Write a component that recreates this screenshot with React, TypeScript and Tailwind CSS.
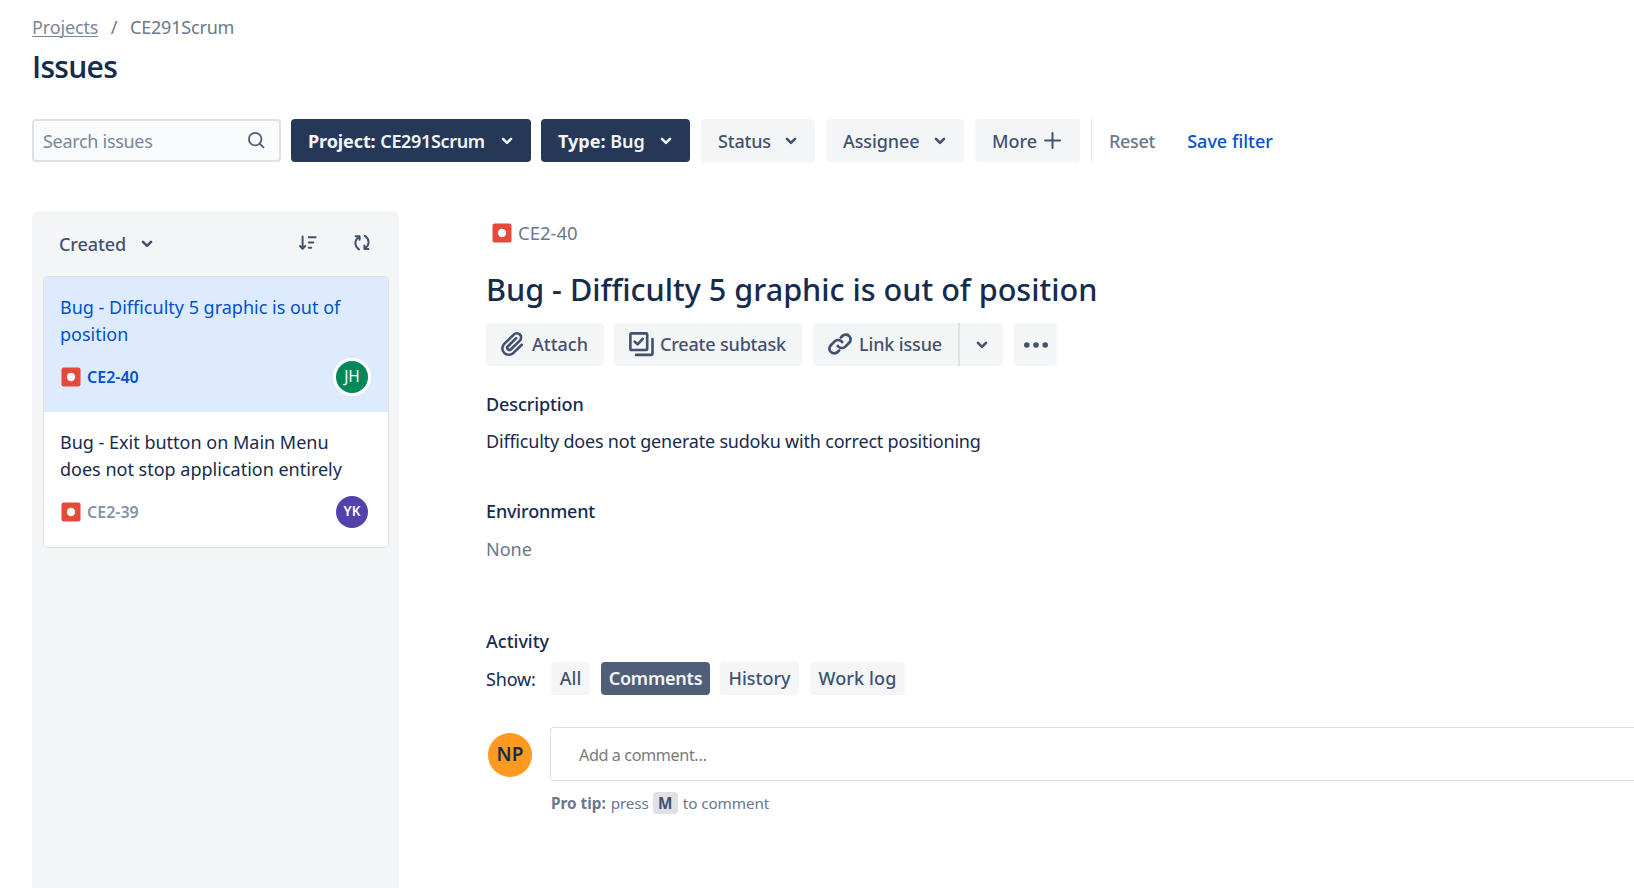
import type { ReactNode } from "react";

function Chevron({ className = "" }: { className?: string }) {
  return (
    <svg width="12" height="8" viewBox="0 0 12 8" fill="none" stroke="currentColor" strokeWidth="2.6" strokeLinecap="round" strokeLinejoin="round" className={`shrink-0 ${className}`}>
      <path d="M2 1.8 L6 5.8 L10 1.8" />
    </svg>
  );
}

function BugIcon({ className = "" }: { className?: string }) {
  return (
    <svg width="20" height="20" viewBox="0 0 20 20" className={`shrink-0 ${className}`}>
      <rect x="0.5" y="0.5" width="19" height="19" rx="2" fill="#e5493a" />
      <circle cx="10" cy="10" r="4.2" fill="#fff" />
    </svg>
  );
}

function AttachIcon() {
  return (
    <svg width="32" height="32" viewBox="0 0 24 24" fill="currentColor" className="mb-px shrink-0">
      <path d="M11.643 17.965c-1.53 1.495-4.016 1.496-5.542.004a3.773 3.773 0 01.002-5.412l7.147-6.985a2.316 2.316 0 013.22-.004c.893.873.895 2.282.004 3.153l-6.703 6.55a.653.653 0 01-.914-.008.62.62 0 010-.902l6.229-6.087a.941.941 0 000-1.353.995.995 0 00-1.384 0l-6.23 6.087a2.502 2.502 0 000 3.607 2.643 2.643 0 003.683.009l6.703-6.55a4.074 4.074 0 00-.003-5.859 4.306 4.306 0 00-5.986.005l-7.148 6.985a5.655 5.655 0 00-.001 8.118c2.29 2.237 6.015 2.238 8.308-.003l6.225-6.084a.94.94 0 000-1.353.995.995 0 00-1.384 0l-6.227 6.085z" />
    </svg>
  );
}

function LinkIcon() {
  return (
    <svg width="32" height="32" viewBox="0 0 24 24" fill="currentColor" className="mb-px shrink-0">
      <path d="M12.856 5.457l-.937.92a1.002 1.002 0 000 1.437 1.047 1.047 0 001.463 0l.984-.966c.967-.95 2.542-1.135 3.602-.288a2.54 2.54 0 01.203 3.81l-2.903 2.852a2.646 2.646 0 01-3.696 0l-1.11-1.09L9 13.57l1.108 1.089c1.822 1.788 4.802 1.788 6.622 0l2.905-2.852a4.558 4.558 0 00-.357-6.82c-1.893-1.517-4.695-1.226-6.422.47zm-1.712 13.09l.937-.921a1 1 0 000-1.437 1.047 1.047 0 00-1.462 0l-.985.966c-.967.95-2.542 1.135-3.602.288a2.54 2.54 0 01-.203-3.81l2.903-2.852a2.646 2.646 0 013.696 0l1.11 1.09L15 10.431l-1.108-1.089c-1.822-1.788-4.802-1.788-6.622 0l-2.905 2.852a4.558 4.558 0 00.357 6.82c1.893 1.517 4.695 1.226 6.422-.47z" />
    </svg>
  );
}

function SubtaskIcon() {
  return (
    <svg width="25" height="25" viewBox="0 0 25 25" fill="none" stroke="currentColor" strokeWidth="2.6" strokeLinecap="round" strokeLinejoin="round" className="mb-px shrink-0">
      <rect x="1.4" y="1.4" width="16.8" height="16.6" rx="1" />
      <path d="M5.6 9.6 L8.6 12.4 L13.6 7" />
      <path d="M23.5 7 V21.5 a1.4 1.4 0 0 1 -1.4 1.4 H7" />
    </svg>
  );
}

function FilterButton({ children, width, dark = false }: { children: ReactNode; width: string; dark?: boolean }) {
  return (
    <button className={`flex h-[43px] shrink-0 items-center justify-between rounded pr-[18px] pl-[17px] ${width} ${dark ? "bg-[#253858] font-semibold text-[#f4f5f7]" : "bg-[#f4f5f7] font-medium text-[#42526e]"}`}>
      <span className="pt-px whitespace-nowrap">{children}</span>
      <Chevron />
    </button>
  );
}

function IssueCard({ lines, id, avatar, selected = false }: { lines: string[]; id: string; avatar: ReactNode; selected?: boolean }) {
  return (
    <div className={`flex h-[135px] flex-col pt-[17px] pr-[20px] pl-[16px] ${selected ? "bg-[#deebff] text-[#0052cc]" : "bg-white text-[#172b4d]"}`}>
      {lines.map((line) => (
        <div key={line} className="whitespace-nowrap">{line}</div>
      ))}
      <div className="mt-[13px] flex h-[32px] items-center">
        <BugIcon className="ml-px" />
        <span className={`ml-[6px] flex-1 text-[16px] font-semibold ${selected ? "" : "text-[#8993a4]"}`}>{id}</span>
        {avatar}
      </div>
    </div>
  );
}

function Chip({ children, width, active = false }: { children: ReactNode; width: string; active?: boolean }) {
  return (
    <button className={`flex h-[33px] items-center justify-center rounded font-medium ${width} ${active ? "bg-[#505f79] text-[#f4f5f7]" : "bg-[#f4f5f7] text-[#42526e]"}`}>
      {children}
    </button>
  );
}

export default function App() {
  return (
    <div className="flex h-[888px] w-full flex-col overflow-hidden bg-white pl-[32px] font-['Noto_Sans','Open_Sans',sans-serif] text-[18px] leading-[27px] text-[#172b4d]">
      <nav className="mt-[14px] flex h-[27px] text-[#6b778c]">
        <a className="w-[66px] tracking-[-0.15px] text-[#7a869a] underline decoration-1 underline-offset-2">Projects</a>
        <span className="w-[32px] text-center">/</span>
        <span className="tracking-[-0.2px]">CE291Scrum</span>
      </nav>
      <h1 className="mt-[6px] h-[40px] font-['Open_Sans',sans-serif] text-[30px] leading-[40px] font-semibold tracking-[-0.7px]">Issues</h1>

      <div className="mt-[32px] flex h-[43px] shrink-0 items-center">
        <div className="flex h-[43px] w-[249px] items-center justify-between rounded border-2 border-[#dfe1e6] bg-[#fafbfc] pr-[13px] pl-[9px] text-[#7a869a]">
          <span className="pt-px tracking-[-0.3px]">Search issues</span>
          <svg width="19" height="19" viewBox="0 0 20 20" fill="none" stroke="#505f79" strokeWidth="1.9" strokeLinecap="round">
            <circle cx="8.6" cy="8.6" r="6.6" />
            <path d="M13.4 13.4 L17.4 17.2" />
          </svg>
        </div>
        <div className="ml-[10px] flex gap-[10px]">
          <FilterButton width="w-[240px]" dark>
            <span className="font-bold tracking-[-0.1px]">Project:</span> <span className="tracking-[-0.35px]">CE291Scrum</span>
          </FilterButton>
          <FilterButton width="w-[149px]" dark>
            <span className="font-bold">Type:</span> Bug
          </FilterButton>
        </div>
        <div className="ml-[11px] flex gap-[11px]">
          <FilterButton width="w-[114px]">
            <span className="tracking-[-0.2px]">Status</span>
          </FilterButton>
          <FilterButton width="w-[138px]">
            <span className="tracking-[-0.1px]">Assignee</span>
          </FilterButton>
          <button className="flex h-[43px] w-[105px] items-center rounded bg-[#f4f5f7] pl-[17px] font-medium text-[#42526e]">
            <span className="pt-px">More</span>
            <svg width="17" height="17" viewBox="0 0 17 17" fill="none" stroke="currentColor" strokeWidth="2" strokeLinecap="round" className="mb-px ml-[7px]">
              <path d="M8.5 1 V16 M1 8.5 H16" />
            </svg>
          </button>
        </div>
        <div className="ml-[11px] h-[43px] w-px bg-[#dfe1e6]" />
        <button className="ml-[17px] pt-px font-medium tracking-[-0.3px] text-[#6b778c]">Reset</button>
        <button className="ml-[32px] pt-px font-medium text-[#0052cc]">Save filter</button>
      </div>

      <div className="mt-[49px] flex min-h-0 flex-1">
        <aside className="w-[367px] shrink-0 rounded-t-md bg-[#f4f5f7] px-[11px]">
          <div className="flex h-[65px] items-center pt-px pl-[16px] text-[#42526e]">
            <span className="font-medium tracking-[-0.1px]">Created</span>
            <Chevron className="mb-px ml-[15px]" />
            <svg width="18" height="16" viewBox="0 0 18 16" fill="none" stroke="currentColor" strokeWidth="2" strokeLinecap="round" strokeLinejoin="round" className="mb-[3px] ml-[146px]">
              <path d="M3.6 1.4 V13.6 M1 11 L3.6 13.8 L6.2 11" />
              <path d="M9.8 2.3 H16.6 M9.8 7.5 H14.2 M9.8 12.7 H12.2" />
            </svg>
            <svg width="16" height="16" viewBox="0 0 16 16" fill="none" stroke="currentColor" strokeWidth="2" strokeLinecap="round" strokeLinejoin="round" className="mb-[3px] ml-[37px]">
              <path d="M1.6 1.3 H5.6 V4.8 M5.2 1.8 C0.2 5 0.2 11 5 14.4" />
              <path d="M14.4 13.9 H10.4 V10.4 M10.8 13.4 C15.8 10.2 15.8 4.2 11 0.9" />
            </svg>
          </div>
          <div className="flex w-[346px] flex-col overflow-hidden rounded border border-[#dfe1e6]">
            <IssueCard
              selected
              lines={["Bug - Difficulty 5 graphic is out of", "position"]}
              id="CE2-40"
              avatar={<span className="-mr-[3px] flex size-[38px] items-center justify-center rounded-full border-3 border-white bg-[#00875a] pb-px text-[15.5px] text-white">JH</span>}
            />
            <IssueCard
              lines={["Bug - Exit button on Main Menu", "does not stop application entirely"]}
              id="CE2-39"
              avatar={<span className="flex size-[32px] items-center justify-center rounded-full bg-[#5243aa] pb-px text-[13.5px] font-semibold text-white">YK</span>}
            />
          </div>
        </aside>

        <main className="ml-[87px] flex min-w-0 flex-1 flex-col">
          <div className="mt-[8px] flex h-[27px] items-center text-[#6b778c]">
            <BugIcon className="ml-[6px]" />
            <span className="ml-[6px] text-[18.5px]">CE2-40</span>
          </div>
          <h2 className="mt-[22px] h-[42px] text-[30.6px] leading-[42px] font-medium whitespace-nowrap">Bug - Difficulty 5 graphic is out of position</h2>
          <div className="mt-[13px] flex h-[43px] shrink-0 font-medium text-[#42526e]">
            <button className="flex w-[118px] items-center rounded bg-[#f4f5f7] pl-[11px]">
              <AttachIcon />
              <span className="ml-[3px]">Attach</span>
            </button>
            <button className="ml-[10px] flex w-[188px] items-center rounded bg-[#f4f5f7] pl-[15px]">
              <SubtaskIcon />
              <span className="ml-[6px] tracking-[-0.18px] whitespace-nowrap">Create subtask</span>
            </button>
            <button className="ml-[11px] flex w-[145px] items-center rounded-l bg-[#f4f5f7] pl-[11px]">
              <LinkIcon />
              <span className="ml-[3px] tracking-[-0.15px] whitespace-nowrap">Link issue</span>
            </button>
            <button className="flex w-[45px] items-center justify-center rounded-r border-l-2 border-[#dfe1e6] bg-[#f4f5f7]">
              <Chevron />
            </button>
            <button className="ml-[11px] flex w-[43px] items-center justify-center rounded bg-[#f4f5f7]">
              <svg width="26" height="8" viewBox="0 0 26 8" fill="currentColor">
                <circle cx="3.8" cy="4" r="2.8" />
                <circle cx="13" cy="4" r="2.8" />
                <circle cx="22.2" cy="4" r="2.8" />
              </svg>
            </button>
          </div>

          <h3 className="mt-[25px] font-medium tracking-[-0.1px]">Description</h3>
          <p className="mt-[10px] tracking-[-0.2px]">Difficulty does not generate sudoku with correct positioning</p>
          <h3 className="mt-[43px] font-medium tracking-[-0.15px]">Environment</h3>
          <p className="mt-[11px] text-[#6b778c]">None</p>
          <h3 className="mt-[65px] font-medium">Activity</h3>
          <div className="mt-[7px] flex h-[33px] items-center">
            <span className="w-[65px] pt-[2px] tracking-[-0.15px]">Show:</span>
            <Chip width="w-[39px]">All</Chip>
            <div className="ml-[11px] flex gap-[10px]">
              <Chip width="w-[109px]" active>
                <span className="font-semibold tracking-[-0.2px]">Comments</span>
              </Chip>
              <Chip width="w-[79px]">History</Chip>
            </div>
            <div className="ml-[11px] flex">
              <Chip width="w-[95px]">
                <span className="tracking-[0.15px] whitespace-nowrap">Work log</span>
              </Chip>
            </div>
          </div>

          <div className="mt-[32px] flex">
            <span className="mt-[6px] ml-[2px] flex size-[44px] shrink-0 items-center justify-center rounded-full bg-[#ff991f] pb-px text-[19px] font-semibold">NP</span>
            <div className="ml-[18px] min-w-0 flex-1">
              <div className="flex h-[54px] items-center rounded-l border border-r-0 border-[#dfe1e6] pt-[2px] pl-[28px] text-[16.2px] tracking-[-0.4px] text-[#7a7a7a]">Add a comment…</div>
              <p className="mt-[11px] flex h-[22px] items-center text-[15.3px] text-[#6b778c]">
                <span className="ml-px font-bold">Pro tip:</span>
                <span className="ml-[5px] tracking-[-0.15px]">press</span>
                <kbd className="mr-[5px] ml-[4px] flex h-[22px] w-[25px] items-center justify-center rounded bg-[#dfe1e6] font-['Noto_Sans',sans-serif] text-[15.3px] font-bold text-[#42526e]">M</kbd>
                <span className="tracking-[-0.1px]">to comment</span>
              </p>
            </div>
          </div>
        </main>
      </div>
    </div>
  );
}
